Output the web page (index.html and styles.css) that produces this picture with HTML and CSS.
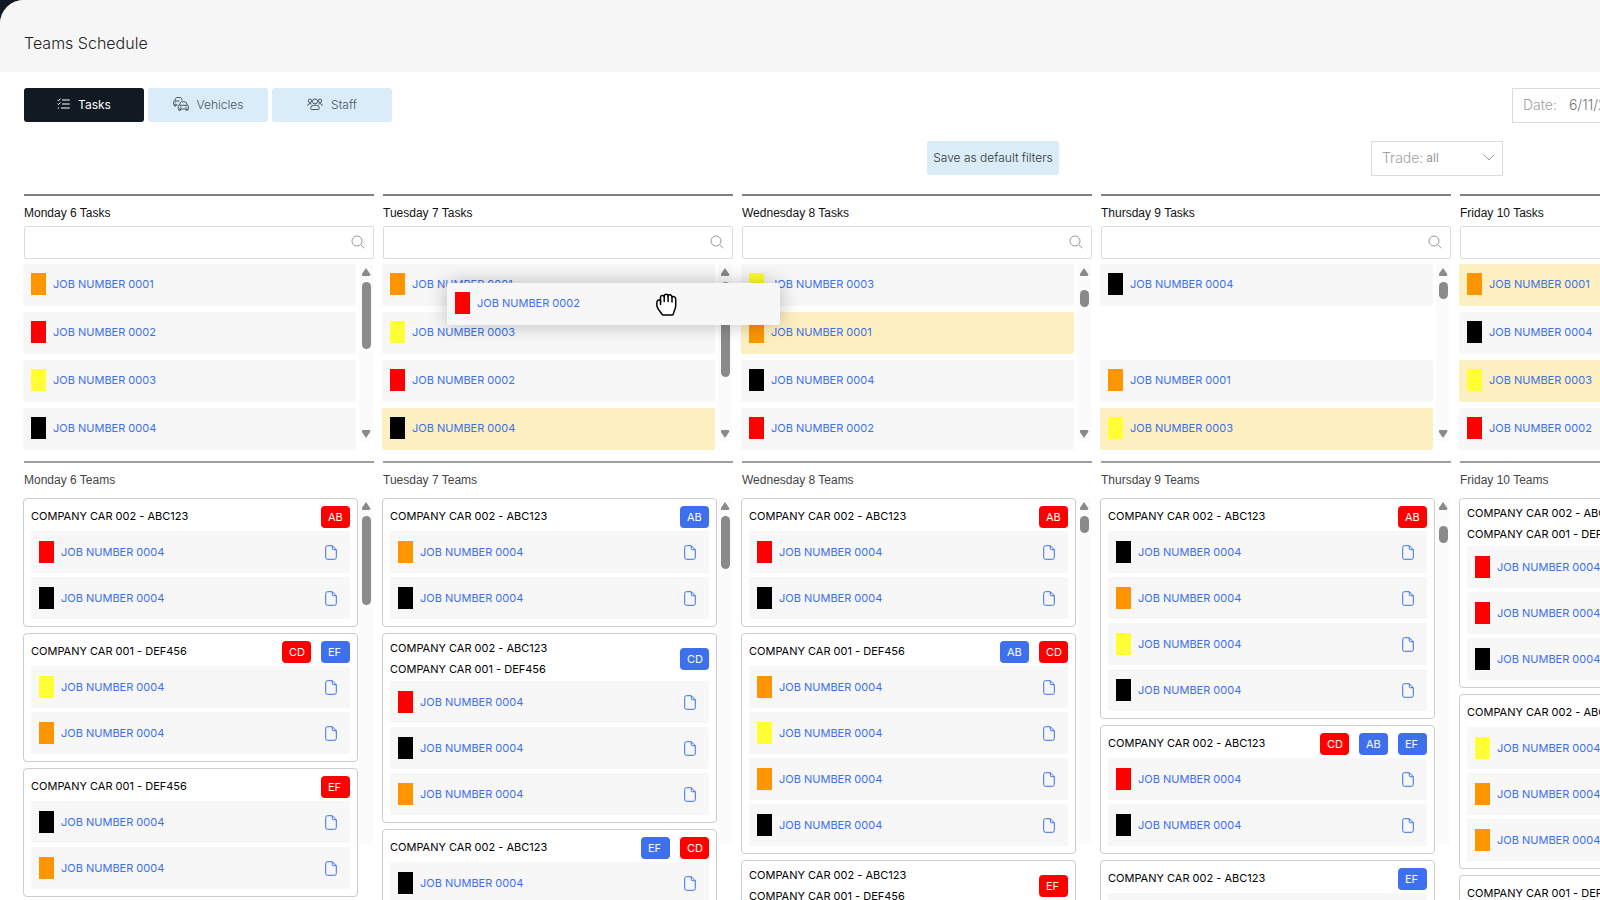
FILE: index.html
```html
<!DOCTYPE html>
<html lang="en">

<head>
    <meta charset="UTF-8">
    <meta name="viewport" content="width=device-width, initial-scale=1.0">
    <title>Teams Schedule</title>
    <link rel="stylesheet" href="styles.css">
</head>

<body>
    <svg class="sprite" aria-hidden="true">
        <symbol id="icon-search" viewBox="0 0 14 14">
            <circle cx="6" cy="6" r="5" />
            <path d="M9.600 9.600L13.300 13.200" />
        </symbol>
        <symbol id="icon-file" viewBox="0 0 12 15">
            <path d="M2.500 .7H7.300L11.300 4.700V12.500a1.800 1.800 0 0 1-1.800 1.800H2.500a1.800 1.800 0 0 1-1.800-1.800V2.500A1.800 1.800 0 0 1 2.500 .7z" />
            <path d="M7.300 .9V3.700a1 1 0 0 0 1 1H11.200" />
        </symbol>
    </svg>

    <div class="page">
        <header class="header">
            <h1>Teams Schedule</h1>
        </header>

        <main class="content">
            <div class="toolbar">
                <button class="tab active" type="button">
                    <svg class="tab-icon small" viewBox="0 0 13 12">
                        <path d="M.5 1.800L1.500 2.800L3.500 .6M.5 5.600L1.500 6.600L3.500 4.400M.8 10H2.200M5 2H12.700M5 6H12.700M4 10H12.700" />
                    </svg>
                    Tasks
                </button>
                <button class="tab" type="button">
                    <svg class="tab-icon" viewBox="0 0 16 14">
                        <path d="M4.500 7.800H1.200A.7 .7 0 0 1 .5 7.100V5.200a1.200 1.200 0 0 1 1-1.200L2.700 1.300A1.200 1.200 0 0 1 3.800 .5H7.200A1.200 1.200 0 0 1 8.300 1.200L9.300 3.500M1.500 4H6.500M1.300 7.800V9H3V7.800M2 5.800H3.200" />
                        <path d="M6.300 8.300L7.300 5.600A1.200 1.200 0 0 1 8.400 4.800H12.300A1.200 1.200 0 0 1 13.400 5.600L14.400 8.300A1.200 1.200 0 0 1 15.500 9.500V11.500a.5 .5 0 0 1-.5 .5H5.700a.5 .5 0 0 1-.5-.5V9.500A1.200 1.200 0 0 1 6.300 8.300zM6.300 8.300H14.400M5.900 12V13.300H7.500V12M13.200 12V13.300H14.800V12M7 10.200H8.400M12.300 10.200H13.700" />
                    </svg>
                    Vehicles
                </button>
                <button class="tab" type="button">
                    <svg class="tab-icon" viewBox="0 0 16 12">
                        <circle cx="8" cy="3.400" r="2.500" />
                        <circle cx="3" cy="2.800" r="1.700" />
                        <circle cx="13" cy="2.800" r="1.700" />
                        <path d="M3.700 10.500A3 3 0 0 1 6.500 7.300H9.500A3 3 0 0 1 12.300 10.500A1 1 0 0 1 11.300 11.500H4.700A1 1 0 0 1 3.700 10.500zM.6 7.800A2.500 2.500 0 0 1 3 5.600L4.500 6M15.400 7.800A2.500 2.500 0 0 0 13 5.600L11.500 6" />
                    </svg>
                    Staff
                </button>
                <div class="field date">
                    <label for="date">Date:</label>
                    <input type="text" id="date" value="6/11/2023">
                </div>
            </div>

            <div class="filters">
                <button class="save" type="button">Save as default filters</button>
                <div class="field trade">
                    <label for="trade">Trade:</label>
                    <select id="trade">
                        <option>all</option>
                    </select>
                    <svg class="chevron" viewBox="0 0 12 7">
                        <path d="M.7 .7L6 6L11.300 .7" />
                    </svg>
                </div>
            </div>

            <div class="board" id="board"></div>
        </main>
    </div>

    <script>
        // task: [color, number, highlighted], null = empty slot
        // bar: [offset, height] of the scroll thumb
        var CAR1 = 'COMPANY CAR 001 - DEF456'
        var CAR2 = 'COMPANY CAR 002 - ABC123'
        var days = [
            {
                name: 'Monday 6',
                tasks: [['orange', '0001'], ['red', '0002'], ['yellow', '0003'], ['black', '0004']],
                taskBar: [0, 67],
                teamBar: [0, 89],
                teams: [
                    { cars: [CAR2], staff: ['red AB'], jobs: ['red', 'black'] },
                    { cars: [CAR1], staff: ['red CD', 'blue EF'], jobs: ['yellow', 'orange'] },
                    { cars: [CAR1], staff: ['red EF'], jobs: ['black', 'orange'] }
                ]
            },
            {
                name: 'Tuesday 7',
                tasks: [['orange', '0001'], ['yellow', '0003'], ['red', '0002'], ['black', '0004', true]],
                dragged: ['red', '0002'],
                taskBar: [0, 95],
                teamBar: [0, 53],
                teams: [
                    { cars: [CAR2], staff: ['blue AB'], jobs: ['orange', 'black'] },
                    { cars: [CAR2, CAR1], staff: ['blue CD'], jobs: ['red', 'black', 'orange'] },
                    { cars: [CAR2], staff: ['blue EF', 'red CD'], jobs: ['black'] }
                ]
            },
            {
                name: 'Wednesday 8',
                tasks: [['yellow', '0003'], ['orange', '0001', true], ['black', '0004'], ['red', '0002']],
                taskBar: [8, 17],
                teamBar: [0, 17],
                teams: [
                    { cars: [CAR2], staff: ['red AB'], jobs: ['red', 'black'] },
                    { cars: [CAR1], staff: ['blue AB', 'red CD'], jobs: ['orange', 'yellow', 'orange', 'black'] },
                    { cars: [CAR2, CAR1], staff: ['red EF'], jobs: [] }
                ]
            },
            {
                name: 'Thursday 9',
                tasks: [['black', '0004'], null, ['orange', '0001'], ['yellow', '0003', true]],
                taskBar: [0, 17],
                teamBar: [10, 17],
                teams: [
                    { cars: [CAR2], staff: ['red AB'], jobs: ['black', 'orange', 'yellow', 'black'] },
                    { cars: [CAR2], staff: ['red CD', 'blue AB', 'blue EF'], jobs: ['red', 'black'] },
                    { cars: [CAR2], staff: ['blue EF'], jobs: ['red'] }
                ]
            },
            {
                name: 'Friday 10',
                tasks: [['orange', '0001', true], ['black', '0004'], ['yellow', '0003', true], ['red', '0002']],
                taskBar: [0, 67],
                teamBar: [0, 67],
                teams: [
                    { cars: [CAR2, CAR1], staff: ['red AB'], jobs: ['red', 'red', 'black'] },
                    { cars: [CAR2], staff: ['blue CD'], jobs: ['yellow', 'orange', 'orange'] },
                    { cars: [CAR1], staff: ['red EF'], jobs: [] }
                ]
            }
        ]

        function jobContent(color, number) {
            return `<span class="swatch ${color}"></span><a class="job-link" href="#">JOB NUMBER ${number}</a>`
        }

        function taskRow(task) {
            if (!task) {
                return '<li class="job empty"></li>'
            }
            return `<li class="job ${task[2] ? 'highlight' : ''}">${jobContent(task[0], task[1])}</li>`
        }

        function teamCard(team) {
            var cars = team.cars.map(car => `<div>${car}</div>`).join('')
            var staff = team.staff.map(s => {
                var parts = s.split(' ')
                return `<span class="badge ${parts[0]}">${parts[1]}</span>`
            }).join('')
            var jobs = team.jobs.map(color => `<li class="job">${jobContent(color, '0004')}
                <button class="file" type="button" aria-label="Open document"><svg><use href="#icon-file"/></svg></button></li>`).join('')
            return `<article class="card">
                <div class="card-head"><div class="cars">${cars}</div>${staff}</div>
                <ul class="card-jobs">${jobs}</ul>
            </article>`
        }

        function scrollBar(bar) {
            return `<div class="scrollbar">
                <span class="arrow up"></span>
                <span class="thumb" style="margin-top: ${bar[0]}px; height: ${bar[1]}px"></span>
                <span class="arrow down"></span>
            </div>`
        }

        function dayColumn(day, i) {
            var dragged = day.dragged ? `<div class="job dragged">${jobContent(day.dragged[0], day.dragged[1])}
                <svg class="hand" viewBox="0 0 21 23">
                    <path d="M5.500 20.500C3.800 18.300 1.600 16 1.100 13.500C.7 11.500 .8 8.500 1.600 7.500C2.400 6.600 3.900 6.900 4.500 7.800V4.200C4.700 2.300 7.200 1.900 8.200 3.300C8.300 .7 11.400 .5 12.100 2.800C12.900 1.200 15.700 1.500 16 3.900C17.500 3.200 19.600 3.900 19.700 6V12.500C19.700 16 17.800 18 17.500 20.500C17.400 21.700 17 22 16 22H7.300C6.400 22 6.100 21.400 5.500 20.500z" />
                    <path d="M4.500 7.500V11.500M8.200 3.500V8.500M12.100 3V8.500M16 4V9" />
                </svg></div>` : ''
            return `<section class="day">
                <div class="tasks">
                    <h2><label for="search${i}">${day.name} Tasks</label></h2>
                    <div class="search"><input type="text" id="search${i}"><svg><use href="#icon-search"/></svg></div>
                    <div class="scroller">
                        <ul class="task-list">${day.tasks.map(taskRow).join('')}</ul>
                        ${scrollBar(day.taskBar)}
                        ${dragged}
                    </div>
                </div>
                <div class="teams">
                    <h2>${day.name} Teams</h2>
                    <div class="scroller">
                        <div class="cards">${day.teams.map(teamCard).join('')}</div>
                        ${scrollBar(day.teamBar)}
                    </div>
                </div>
            </section>`
        }

        document.getElementById('board').innerHTML = days.map(dayColumn).join('')
    </script>
</body>

</html>
```
FILE: styles.css
```css
* {
    box-sizing: border-box;
}

body {
    margin: 0;
    height: 100vh;
    overflow: hidden;
    background-color: #111a22;
    font-family: Inter, "Liberation Sans", sans-serif;
    font-size: 11px;
    line-height: 14px;
    color: #000;
}

h1,
h2,
ul {
    margin: 0;
    padding: 0;
}

ul {
    list-style: none;
}

button,
input,
select {
    font-family: inherit;
    border: none;
    padding: 0;
    background: none;
}

svg {
    fill: none;
    stroke: currentColor;
    flex: none;
}

.sprite {
    display: none;
}

.page {
    height: 100vh;
    background-color: #fff;
    border-top-left-radius: 24px;
    overflow: hidden;
}

.header {
    padding: 27px 24px 13px;
    background-color: #f6f6f6;
}

.header h1 {
    font-size: 16px;
    font-weight: 300;
    line-height: 32px;
    color: #222;
}

/* the board is wider than the window, so the whole content grows with it */
.content {
    width: max-content;
    min-width: 100%;
    padding: 16px 24px 0;
}

.toolbar {
    display: flex;
    gap: 4px;
}

.tab {
    display: flex;
    align-items: center;
    justify-content: center;
    gap: 8px;
    width: 120px;
    height: 34px;
    padding-bottom: 2px;
    border-radius: 3px;
    background-color: #d9ecf8;
    color: #4a555d;
    font-size: 12px;
    font-weight: 300;
}

.tab.active {
    background-color: #111a22;
    color: #fff;
    font-weight: 400;
}

.tab-icon {
    width: 16px;
    height: 14px;
}

.tab-icon.small {
    width: 13px;
    height: 12px;
}

.field {
    display: flex;
    align-items: center;
    height: 35px;
    padding: 0 7px 2px 10px;
    border: 1px solid #dcdcdc;
    color: #a0a0a0;
    font-size: 14px;
    font-weight: 300;
}

.date {
    width: 298px;
    margin-left: auto;
    gap: 12px;
}

.date input {
    flex: 1;
    min-width: 0;
    font-size: 14px;
    font-weight: 300;
    color: #777;
}

.filters {
    display: flex;
    justify-content: flex-end;
    gap: 312px;
    margin: 18px 0;
    padding-right: 307px;
}

.save {
    width: 132px;
    height: 34px;
    padding-bottom: 2px;
    border-radius: 3px;
    background-color: #d9ecf8;
    color: #333;
    font-size: 12px;
    font-weight: 300;
    white-space: nowrap;
}

.trade {
    width: 132px;
    gap: 3px;
}

.trade select {
    flex: 1;
    min-width: 0;
    appearance: none;
    font-size: 12px;
    color: #999;
}

.chevron {
    width: 12px;
    height: 7px;
}

.board {
    display: grid;
    grid-template-columns: repeat(5, minmax(350px, 1fr));
    gap: 9px;
}

.tasks {
    border-top: 2px solid #808080;
}

.teams {
    margin-top: 11px;
    border-top: 2px solid #a0a0a0;
}

.day h2 {
    padding-top: 4px;
    font-family: "Liberation Sans", Arial, sans-serif;
    font-size: 12px;
    font-weight: 400;
    line-height: 26px;
    color: #111;
}

.teams h2 {
    margin-bottom: 5px;
    color: #444;
}

.search {
    display: flex;
    align-items: center;
    height: 33px;
    margin-bottom: 5px;
    padding: 0 8px 2px;
    border: 1px solid #dcdcdc;
    border-radius: 2px;
    color: #999;
}

.search input {
    flex: 1;
    min-width: 0;
}

.search svg {
    width: 14px;
    height: 14px;
}

.scroller {
    position: relative;
    display: flex;
    margin: 0 1px 0 -1px;
}

.task-list {
    flex: 1;
    display: flex;
    flex-direction: column;
    gap: 6px;
    margin-right: 3px;
}

.job {
    display: flex;
    align-items: center;
    gap: 7px;
    height: 42px;
    padding: 0 8px;
    border-radius: 2px;
    background-color: #f7f7f7;
}

.task-list .job,
.dragged {
    padding-bottom: 2px;
}

.job.highlight {
    background-color: #fdf0c0;
}

.job.empty {
    background: none;
}

.job-link {
    color: #3b6fee;
    text-decoration: none;
}

.swatch {
    width: 15px;
    height: 22px;
}

.red {
    background-color: #f00;
}

.orange {
    background-color: #ff9500;
}

.yellow {
    background-color: #ff3;
}

.black {
    background-color: #000;
}

.blue {
    background-color: #3e70ee;
}

.dragged {
    position: absolute;
    top: 19px;
    left: 65px;
    z-index: 2;
    width: 333px;
    box-shadow: 0 0 20px rgba(0, 0, 0, 0.25);
}

.hand {
    width: 21px;
    height: 23px;
    margin: 2px 95px 0 auto;
    fill: #fff;
    color: #000;
    stroke-width: 1.5;
    stroke-linecap: round;
}

.scrollbar {
    display: flex;
    flex-direction: column;
    align-items: center;
    width: 14px;
    height: 177px;
    padding: 4px 0 3px;
    background-color: #fbfbfb;
}

.teams .scrollbar {
    height: 346px;
}

.arrow {
    width: 9px;
    height: 8px;
    background-color: #8a8a8a;
}

.arrow.up {
    margin-bottom: 6px;
    clip-path: polygon(50% 0, 100% 80%, 90% 100%, 10% 100%, 0 80%);
}

.arrow.down {
    margin-top: auto;
    clip-path: polygon(10% 0, 90% 0, 100% 20%, 50% 100%, 0 20%);
}

.teams .arrow.down {
    visibility: hidden;
}

.thumb {
    width: 9px;
    border-radius: 5px;
    background-color: #8a8a8a;
}

.cards {
    flex: 1;
    display: flex;
    flex-direction: column;
    gap: 6px;
    margin-right: 1px;
}

.card {
    padding: 4px 7px 7px;
    border: 1px solid #ccc;
    border-radius: 4px;
}

.card-head {
    display: flex;
    align-items: center;
    gap: 10px;
    min-height: 27px;
    margin-bottom: 1px;
}

.cars {
    flex: 1;
    line-height: 21px;
}

.badge {
    width: 29px;
    height: 22px;
    padding-left: 7px;
    border-radius: 4px;
    color: #fff;
    line-height: 22px;
}

.card-jobs {
    display: flex;
    flex-direction: column;
    gap: 4px;
}

.file {
    display: flex;
    margin-left: auto;
    margin-right: 5px;
    color: #3b6fee;
    cursor: pointer;
}

.file svg {
    width: 12px;
    height: 15px;
}
```
